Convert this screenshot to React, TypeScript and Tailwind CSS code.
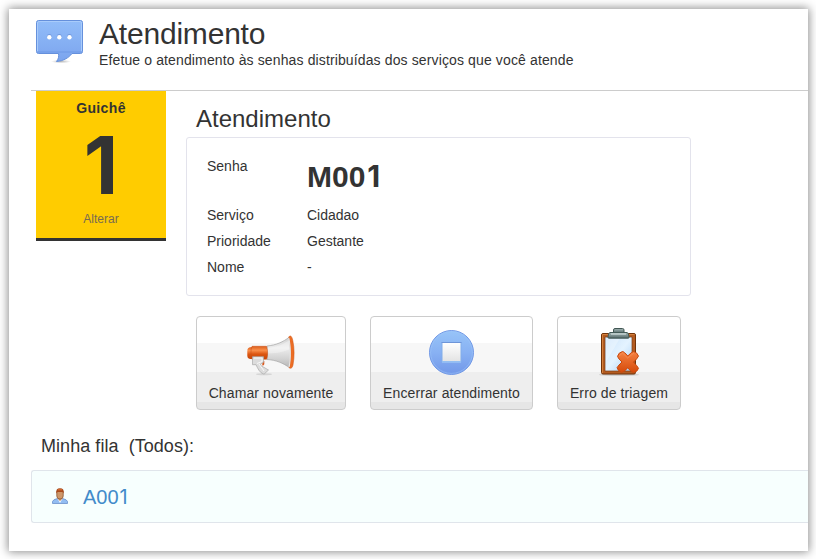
import type { ReactNode } from "react";

function ChatIcon() {
  return (
    <svg width="48" height="46" viewBox="0 0 48 46" className="block">
      <defs>
        <linearGradient id="chat" x1="0" y1="0" x2="0" y2="1">
          <stop offset="0" stopColor="#92bdf9" />
          <stop offset="1" stopColor="#7ba4ee" />
        </linearGradient>
        <radialGradient id="chatShadow">
          <stop offset="0" stopColor="#777" stopOpacity=".5" />
          <stop offset="1" stopColor="#777" stopOpacity="0" />
        </radialGradient>
      </defs>
      <ellipse cx="25" cy="41.500" rx="10" ry="1.800" fill="url(#chatShadow)" />
      <path d="M2.500 .5h42a2 2 0 0 1 2 2v29a2 2 0 0 1-2 2H36c-3 4-8 7.300-15.500 8 2-2.500 2.500-5 2-8h-20a2 2 0 0 1-2-2v-29a2 2 0 0 1 2-2z" fill="url(#chat)" stroke="#6590dc" />
      <path d="M1.500 31V3a1.500 1.500 0 0 1 1.500-1.500h41A1.500 1.500 0 0 1 45.500 3v28" fill="none" stroke="#a9ccfb" strokeWidth="1" />
      <path d="M2 32h43" stroke="#6d98e5" />
      <g fill="#5d86d4" opacity=".6">
        <circle cx="13.300" cy="16.500" r="2.400" />
        <circle cx="23.300" cy="16.500" r="2.400" />
        <circle cx="33.500" cy="16.500" r="2.400" />
      </g>
      <g fill="#fff">
        <circle cx="13.300" cy="17.200" r="2.200" />
        <circle cx="23.300" cy="17.200" r="2.200" />
        <circle cx="33.500" cy="17.200" r="2.200" />
      </g>
    </svg>
  );
}

function MegaphoneIcon() {
  return (
    <svg width="48" height="48" viewBox="0 0 48 48" className="block">
      <defs>
        <linearGradient id="horn" x1="0" y1="0" x2="0" y2="1">
          <stop offset="0" stopColor="#cfcfcf" />
          <stop offset=".35" stopColor="#ededed" />
          <stop offset=".7" stopColor="#d2d2d2" />
          <stop offset="1" stopColor="#b5b5b5" />
        </linearGradient>
        <linearGradient id="body" x1="0" y1="0" x2="0" y2="1">
          <stop offset="0" stopColor="#dc5f1c" />
          <stop offset=".3" stopColor="#fa8f4b" />
          <stop offset=".6" stopColor="#dc5510" />
          <stop offset="1" stopColor="#c4480b" />
        </linearGradient>
      </defs>
      <ellipse cx="17" cy="46.300" rx="8" ry="1" fill="#bbb" opacity=".5" />
      <path d="M20 18c9-.8 16-4 22.500-9 2.500 8 2.500 22 .5 31-7-5-14-8-23-8.500z" fill="url(#horn)" stroke="#a5a5a5" strokeWidth=".7" />
      <path d="M20 20c9-.8 15-3 22-7.500v9c-8 3-14 4-22 4z" fill="#fff" opacity=".35" />
      <path d="M41.700 9C44 17 44.500 31 42 39.500c1.700 1.700 3.200.700 4-2.500 1.500-8 1.500-16.500-.2-24.500-.8-4.200-2.400-5.800-4.100-3.500z" fill="#ec6d24" stroke="#cc5010" strokeWidth=".5" />
      <path d="M41.700 10C43.500 17 44 31 42 39" fill="none" stroke="#e5e5e5" strokeWidth="1.200" />
      <path d="M3 19.300Q.3 20 .3 23v4.500Q.3 30.500 3 31h3V19z" fill="url(#body)" />
      <path d="M5 18.300h14.500c1.500 4 1.500 9.500 0 13H5c-1.500-4-1.500-9 0-13z" fill="url(#body)" stroke="#c94d12" strokeWidth=".5" />
      <path d="M15.300 33h2v3c0 .8-.8 1.500-2 1.500z" fill="#d9571b" />
      <path d="M5.500 28.700h11v5.500l-3 2 .5 1.500 7.500 4.300-4.500 4.200c-4.500-1.400-6-5.500-8-9.500H5.500z" fill="#dcdcdc" stroke="#a9a9a9" strokeWidth=".7" />
      <path d="M7 30h8v3.500l-5 2m2 .5 5 7" fill="none" stroke="#f7f7f7" strokeWidth="1" />
    </svg>
  );
}

function StopIcon() {
  return (
    <svg width="48" height="48" viewBox="0 0 48 48" className="block">
      <defs>
        <linearGradient id="disc" x1="0" y1="0" x2="0" y2="1">
          <stop offset="0" stopColor="#97c4f8" />
          <stop offset=".5" stopColor="#88b1f3" />
          <stop offset="1" stopColor="#7197e8" />
        </linearGradient>
        <linearGradient id="square" x1="0" y1="0" x2="0" y2="1">
          <stop offset="0" stopColor="#fff" />
          <stop offset="1" stopColor="#e3e3e3" />
        </linearGradient>
      </defs>
      <circle cx="23.500" cy="24.500" r="22" fill="url(#disc)" stroke="#7299e6" strokeWidth="1" />
      <circle cx="23.500" cy="24.500" r="20.900" fill="none" stroke="#9fc8fa" strokeWidth="1" opacity=".5" />
      <rect x="14" y="14.500" width="19" height="19" fill="url(#square)" stroke="#81aeea" />
      <path d="M13.500 14.500h20" stroke="#6e95d8" />
      <path d="M14 34h19" stroke="#a7d1fa" />
    </svg>
  );
}

function ClipboardIcon() {
  return (
    <svg width="48" height="48" viewBox="0 0 48 48" className="block">
      <defs>
        <linearGradient id="paper" x1="0" y1="0" x2="1" y2="1">
          <stop offset="0" stopColor="#cbe3fa" />
          <stop offset=".5" stopColor="#e4f3ff" />
          <stop offset="1" stopColor="#a9d0f5" />
        </linearGradient>
        <linearGradient id="clip" x1="0" y1="0" x2="0" y2="1">
          <stop offset="0" stopColor="#a3b6b5" />
          <stop offset="1" stopColor="#586c6d" />
        </linearGradient>
        <linearGradient id="cross" x1="0" y1="0" x2="0" y2="1">
          <stop offset="0" stopColor="#f58243" />
          <stop offset="1" stopColor="#d54a0a" />
        </linearGradient>
      </defs>
      <ellipse cx="24" cy="46.700" rx="20" ry="1" fill="#888" opacity=".4" />
      <rect x="6.500" y="5.500" width="34" height="40.500" rx="1.500" fill="#b35b20" stroke="#713309" />
      <path d="M7.500 45V6.500h32" fill="none" stroke="#d3803e" />
      <path d="M10 9h27v34H10z" fill="url(#paper)" stroke="#783c17" strokeWidth=".7" />
      <path d="M11 10h14L11 34z" fill="#fff" opacity=".3" />
      <path d="M14 9h19" stroke="#405653" strokeWidth="3" />
      <path d="M18.500 5V2Q18.500.5 20 .5h7.500Q29 .5 29 2v3z" fill="url(#clip)" stroke="#415653" />
      <path d="M15 4.500h17q2 0 2 5.500H13q0-5.500 2-5.500z" fill="url(#clip)" stroke="#445b58" />
      <path d="M16 6h15" stroke="#dbe7e7" />
      <path d="M27.500 23.500q1.500 0 5.300 4.500 4-4.500 6-4.500 3.500 1 4.700 4.600-1.500 3-5 6 3.500 3.500 5 6.200-1 3.500-4.800 4.300-2.500-.5-6-4.700-3.500 4-6 4.500-3.500-1-4.700-4.700 1.500-2.500 5-5.700-3.500-3-4.500-5.600 1-4 5-4.900z" fill="url(#cross)" stroke="#c7480f" strokeWidth="1" strokeLinejoin="round" />
      <path d="M24 28l3.500-3 5.200 5 6.200-5" fill="none" stroke="#ffad78" strokeWidth=".7" opacity=".5" />
    </svg>
  );
}

function PersonIcon() {
  return (
    <svg width="16" height="16" viewBox="0 0 16 16" className="block">
      <path d="M.5 15.500v-2q.5-2 5-3h5q4.500 1 5 3v2z" fill="#93bdf2" stroke="#6b91cb" strokeWidth=".8" />
      <path d="M5.500 10.500 8 15l2.500-4.500z" fill="#f7fbff" />
      <path d="M6.300 8h3.400v3.400L8 13l-1.700-1.600z" fill="#c78f60" />
      <rect x="4.800" y="1.800" width="6.400" height="9.200" rx="3" fill="#cf9768" stroke="#8b5632" strokeWidth=".8" />
      <path d="M4.200 5.500Q3.600.3 8 .3t3.800 5.200L10.700 4H5.300z" fill="#a84a1c" />
      <path d="M6 1.800h4" stroke="#df7336" />
    </svg>
  );
}

function Field({ label, children }: { label: string; children: ReactNode }) {
  return (
    <div className="flex h-[26px] items-center">
      <dt className="w-[100px]">{label}</dt>
      <dd>{children}</dd>
    </div>
  );
}

function ActionButton({ icon, label, width }: { icon: ReactNode; label: string; width: string }) {
  return (
    <button
      type="button"
      className={`flex h-[94px] flex-col items-center rounded-[4px] border border-[#ccc] bg-[linear-gradient(to_bottom,#fff_0_26px,#f7f7f7_26px_55px,#eee_55px_85px,#e6e6e6_85px)] pt-[11px] whitespace-nowrap ${width}`}
    >
      {icon}
      <span className="mt-[7px] leading-5 tracking-[0.11px]">{label}</span>
    </button>
  );
}

export default function App() {
  return (
    <div className="h-[559px] w-[816px] overflow-hidden bg-white pt-[9px] pl-[9px] font-['Liberation_Sans',Arial,sans-serif] text-sm text-[#333]">
      <main className="h-[542px] w-[799px] overflow-hidden bg-white pl-[22px] shadow-[0_0_9px_1px_rgba(0,0,0,0.45)]">
        <header className="flex h-[82px] border-b border-[#ccc] pt-[11px] pl-[5px]">
          <ChatIcon />
          <div className="ml-[15px]">
            <h1 className="mt-[-4px] text-[30px] leading-[36px] tracking-[-0.2px]">Atendimento</h1>
            <p className="mt-[-2px] leading-5 tracking-[0.127px]">Efetue o atendimento às senhas distribuídas dos serviços que você atende</p>
          </div>
        </header>

        <div className="flex pl-[5px]">
          <aside className="flex h-[150px] w-[130px] flex-col items-center border-b-[3px] border-[#333] bg-[#ffcc00] pt-[7px]">
            <span className="leading-5 font-bold tracking-[0.35px]">Guichê</span>
            <span className="mt-[7px] font-['Inter',sans-serif] text-[80px] leading-[80px] font-bold">1</span>
            <span className="mt-[4px] text-xs leading-5 text-[#776b52]">Alterar</span>
          </aside>

          <section className="ml-5 w-[505px] pt-[12px]">
            <h2 className="h-[34px] pl-[10px] text-2xl leading-[32px]">Atendimento</h2>
            <dl className="h-[159px] rounded-[3px] border border-[#e3e3ec] pt-[18px] pl-5">
              <div className="flex h-[46px]">
                <dt className="w-[100px] leading-5">Senha</dt>
                <dd className="pt-[3px] text-[30px] leading-[36px] font-bold">
                  M00<span className="ml-[2px] font-['Inter',sans-serif] leading-none">1</span>
                </dd>
              </div>
              <Field label="Serviço">Cidadao</Field>
              <Field label="Prioridade">Gestante</Field>
              <Field label="Nome">-</Field>
            </dl>
            <div className="mt-5 flex gap-6 pl-[10px]">
              <ActionButton width="w-[150px]" icon={<MegaphoneIcon />} label="Chamar novamente" />
              <ActionButton width="w-[163px]" icon={<StopIcon />} label="Encerrar atendimento" />
              <ActionButton width="w-[124px]" icon={<ClipboardIcon />} label="Erro de triagem" />
            </div>
          </section>
        </div>

        <section>
          <h3 className="mt-[25px] h-[35px] pl-[10px] text-lg leading-[22px] tracking-[0.05px] whitespace-pre">Minha fila  (Todos):</h3>
          <div className="flex h-[53px] items-center rounded-l-[3px] border border-r-0 border-[#e0e5eb] bg-[#f7fffe] pb-[2px] pl-5">
            <PersonIcon />
            <a className="ml-[15px] pt-[2px] text-xl leading-6 text-[#428bca]">
              A00<span className="ml-px font-['Inter',sans-serif] leading-none">1</span>
            </a>
          </div>
        </section>
      </main>
    </div>
  );
}
